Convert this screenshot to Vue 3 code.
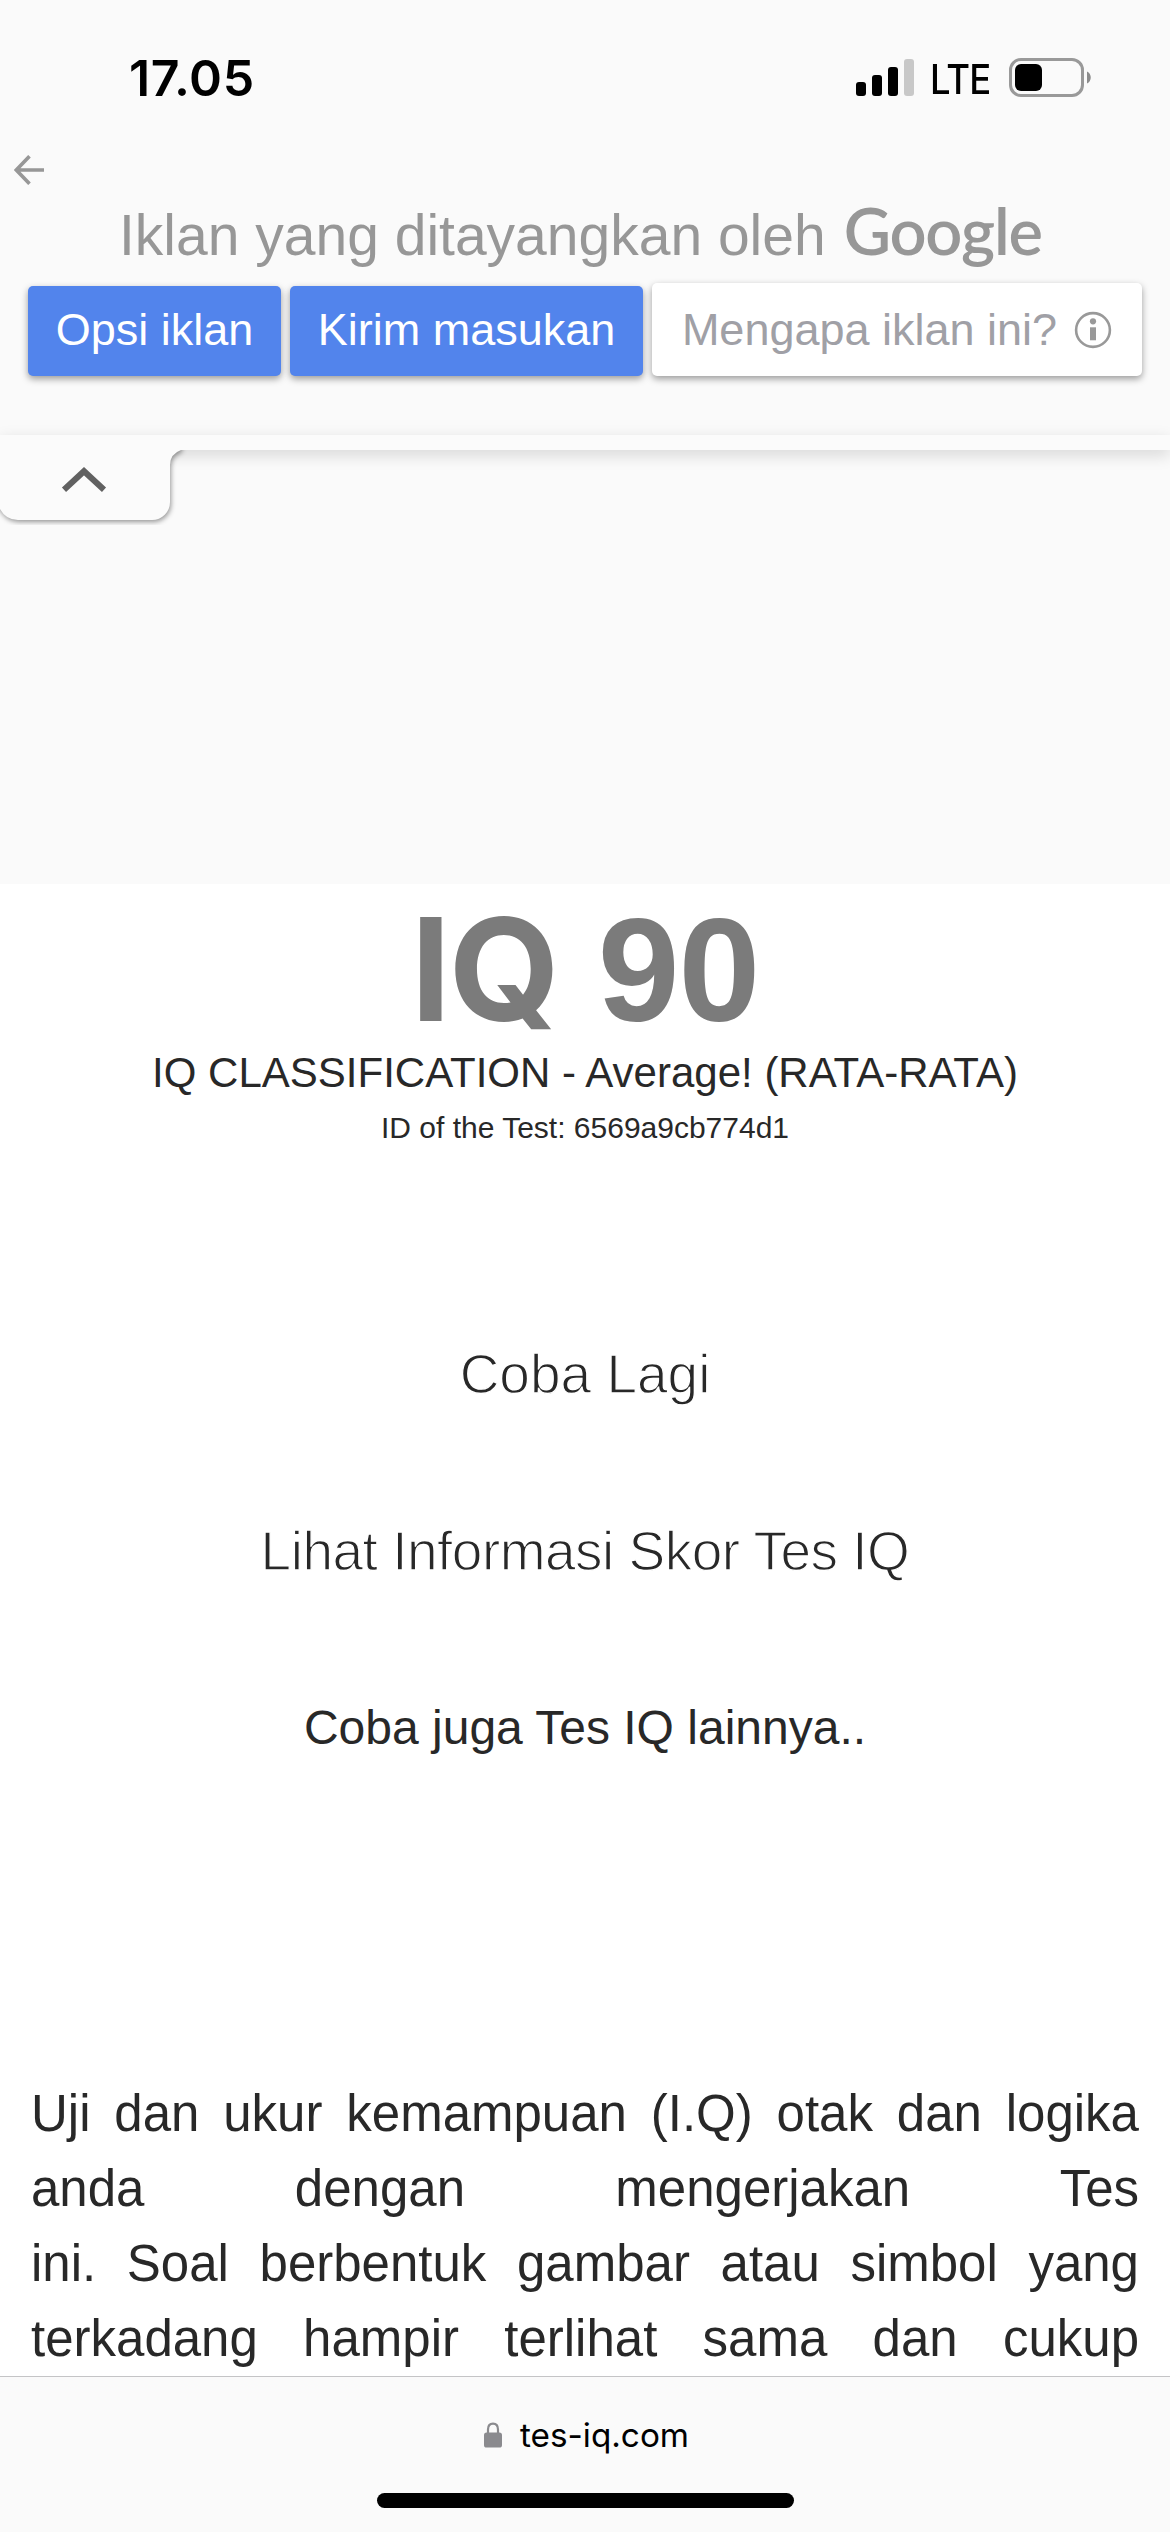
<script setup>
const signalBars = [14, 21, 29, 37]
const links = ['Coba Lagi', 'Lihat Informasi Skor Tes IQ']
const paragraph = [
  'Uji dan ukur kemampuan (I.Q) otak dan logika',
  'anda dengan mengerjakan Tes',
  'ini. Soal berbentuk gambar atau simbol yang',
  'terkadang hampir terlihat sama dan cukup',
]
</script>

<template>
  <div class="screen">
    <header class="status">
      <span class="time">17.05</span>
      <div class="indicators">
        <svg class="signal" width="58" height="37" viewBox="0 0 58 37">
          <rect
            v-for="(h, i) in signalBars"
            :key="i"
            :x="i * 16"
            :y="37 - h"
            width="10"
            :height="h"
            rx="3"
            :fill="i === 3 ? '#c8c8c8' : '#000'"
          />
        </svg>
        <span class="network">LTE</span>
        <svg class="battery" width="83" height="39" viewBox="0 0 83 39">
          <rect x="1.5" y="1.5" width="72" height="36" rx="10.5" fill="none" stroke="#999" stroke-width="3" />
          <rect x="6" y="6" width="27" height="27" rx="6" fill="#000" />
          <path d="M78 13.5c5 2 5 10 0 12z" fill="#8c8c8c" />
        </svg>
      </div>
    </header>

    <section class="ad">
      <svg class="back" width="30" height="30" viewBox="0 0 30 30" fill="none" stroke="#979797" stroke-width="3.6">
        <path d="M30 15H3M15.5 1.2L2.3 15l13.2 13.8" />
      </svg>
      <div class="ad-title">
        <span>Iklan yang ditayangkan oleh</span>
        <span class="google">Google</span>
      </div>
      <div class="ad-buttons">
        <button class="btn options">Opsi iklan</button>
        <button class="btn feedback">Kirim masukan</button>
        <button class="btn why">
          <span>Mengapa iklan ini?</span>
          <svg width="38" height="38" viewBox="0 0 38 38">
            <circle cx="19" cy="19" r="16.9" fill="none" stroke="#999" stroke-width="2.6" />
            <circle cx="19" cy="10.3" r="3.1" fill="#999" />
            <path d="M16 16.3h6v13h-6z" fill="#999" />
          </svg>
        </button>
      </div>
    </section>

    <section class="anchor">
      <div class="strip"></div>
      <svg class="tab" width="190" height="75" viewBox="0 0 190 75">
        <g class="tab-shape">
          <path d="M-2 -10H181V0Q170 4 170 15V52A18 18 0 0 1 152 70H18Q6 70 0 59H-2Z" fill="#fbfbfb" />
        </g>
        <path d="M64 39.8L84 21.2L104 39.8" fill="none" stroke="#616161" stroke-width="6" />
      </svg>
    </section>

    <main class="page">
      <h1 class="score"><span class="label">IQ</span> 90</h1>
      <p class="class">IQ CLASSIFICATION - Average! (RATA-RATA)</p>
      <p class="test-id">ID of the Test: 6569a9cb774d1</p>
      <nav class="links">
        <a v-for="(link, i) in links" :key="link" :class="['link', `link-${i}`]">{{ link }}</a>
      </nav>
      <p class="others">Coba juga Tes IQ lainnya..</p>
      <div class="intro">
        <p v-for="line in paragraph" :key="line">{{ line }}</p>
      </div>
    </main>

    <footer class="bar">
      <div class="address">
        <svg width="18" height="26" viewBox="0 0 18 26">
          <path d="M4 12V7.5C4 3.8 6 1.6 9 1.6s5 2.2 5 5.9V12" fill="none" stroke="#8a8a8e" stroke-width="2.2" />
          <rect x="0" y="10.5" width="18" height="15" rx="2.6" fill="#8a8a8e" />
        </svg>
        <span>tes-iq.com</span>
      </div>
      <div class="home"></div>
    </footer>
  </div>
</template>

<style>
body {
  margin: 0;
  background: #fff;
}
</style>

<style scoped>
.screen {
  width: 1170px;
  height: 2532px;
  overflow: hidden;
  display: flex;
  flex-direction: column;
  background: #fafafa;
  color: #282828;
  font-family: 'Liberation Sans', Arial, sans-serif;
}
p,
h1 {
  margin: 0;
  white-space: nowrap;
}
svg {
  display: block;
  flex: none;
}
.status {
  height: 155px;
  display: flex;
  align-items: center;
  justify-content: space-between;
  padding: 0 78px 0 129px;
  box-sizing: border-box;
  color: #000;
  font-family: Inter, sans-serif;
}
.time {
  font-size: 50px;
  font-weight: 600;
  letter-spacing: 0.6px;
}
.indicators {
  display: flex;
  align-items: center;
}
.network {
  margin-left: 16px;
  width: 79px;
  padding-top: 3px;
  font-size: 40.5px;
  font-weight: 500;
  letter-spacing: -1px;
  transform: scaleX(0.9);
  transform-origin: left;
}
.ad {
  height: 280px;
}
.back {
  margin-left: 14px;
}
.ad-title {
  height: 98px;
  padding: 1px 0 0 119px;
  box-sizing: border-box;
  display: flex;
  align-items: baseline;
  line-height: 98px;
  font-size: 57px;
  color: #979797;
}
.google {
  margin-left: 18px;
  font-family: Lato, sans-serif;
  font-size: 65px;
  line-height: 65px;
  font-weight: 600;
  letter-spacing: -1.2px;
}
.ad-buttons {
  height: 93px;
  padding-left: 28px;
  display: flex;
  align-items: flex-end;
  gap: 9px;
}
.btn {
  height: 90px;
  padding: 0 0 3px;
  border: 0;
  border-radius: 5px;
  box-sizing: border-box;
  display: flex;
  align-items: center;
  justify-content: center;
  background: #5284ec;
  color: #fff;
  font: 45px 'Liberation Sans', Arial, sans-serif;
  white-space: nowrap;
  box-shadow: 0 3px 7px rgba(0, 0, 0, 0.38);
}
.options {
  width: 253px;
}
.feedback {
  width: 353px;
}
.why {
  width: 490px;
  height: 93px;
  padding: 0;
  gap: 17px;
  background: #fff;
  color: #a0a0a6;
}
.anchor {
  height: 449px;
}
.strip {
  height: 15px;
  background: #fbfbfb;
  box-shadow: 0 5px 16px rgba(0, 0, 0, 0.15);
}
.tab {
  position: relative;
  overflow: hidden;
}
.tab-shape {
  filter: drop-shadow(1px 2px 2.5px rgba(0, 0, 0, 0.4));
}
.page {
  height: 1492px;
  overflow: hidden;
  background: #fff;
  text-align: center;
}
.score {
  margin-top: 12px;
  height: 146px;
  line-height: 146px;
  font-size: 147px;
  letter-spacing: -1px;
  color: #7b7b7b;
}
.label {
  font-family: Inter, sans-serif;
  font-size: 143px;
  letter-spacing: -2px;
}
.class {
  height: 62px;
  line-height: 62px;
  font-size: 42px;
}
.test-id {
  height: 48px;
  line-height: 48px;
  font-size: 30px;
}
.links {
  margin-top: 134px;
  display: flex;
  flex-direction: column;
  align-items: center;
}
.link {
  height: 177px;
  line-height: 177px;
  font-size: 55px;
  -webkit-text-stroke: 1.3px #fff;
}
.link-1 {
  letter-spacing: -0.5px;
}
.others {
  margin-top: 27px;
  height: 122px;
  line-height: 122px;
  font-size: 48px;
}
.intro {
  margin: 287px 31px 0;
}
.intro p {
  height: 75px;
  line-height: 75px;
  font-size: 51px;
  text-align: justify;
  text-align-last: justify;
}
.bar {
  flex: 1;
  border-top: 1px solid #c4c4c6;
  display: flex;
  flex-direction: column;
  align-items: center;
  color: #000;
}
.address {
  height: 116px;
  padding-left: 3px;
  display: flex;
  align-items: center;
  gap: 18px;
  font: 33.3px Inter, sans-serif;
}
.home {
  width: 417px;
  height: 15px;
  border-radius: 8px;
  background: #000;
}
</style>
